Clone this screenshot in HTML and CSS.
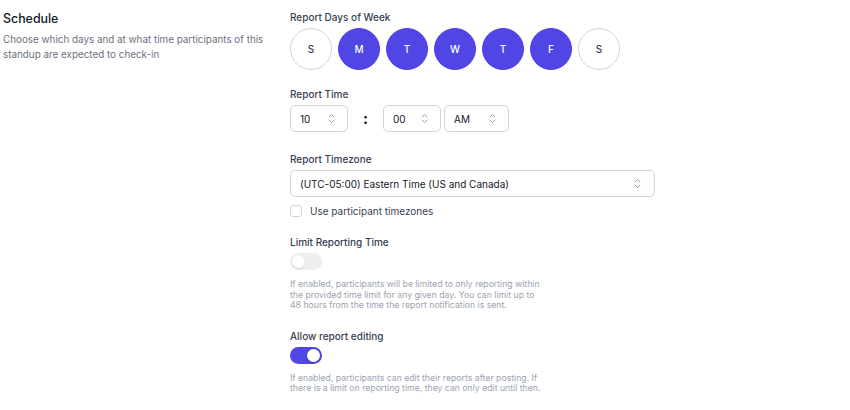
FILE: index.html
```html
<!DOCTYPE html>
<html lang="en">
<head>
    <meta charset="UTF-8">
    <meta name="viewport" content="width=device-width, initial-scale=1.0">
    <title>Schedule</title>
    <link rel="stylesheet" href="styles.css">
</head>
<body>

    <div class="section">
        <div class="intro">
            <h2>Schedule</h2>
            <p>Choose which days and at what time participants of this standup are expected to check-in</p>
        </div>

        <div class="fields">
            <div class="field days-field">
                <label>Report Days of Week</label>
                <div class="days">
                    <span class="day">S</span>
                    <span class="day on">M</span>
                    <span class="day on">T</span>
                    <span class="day on">W</span>
                    <span class="day on">T</span>
                    <span class="day on">F</span>
                    <span class="day">S</span>
                </div>
            </div>

            <div class="field time-field">
                <label>Report Time</label>
                <div class="time-row">
                    <div class="select small">
                        <span>10</span>
                        <svg width="7" height="11" viewBox="0 0 7 11"><path d="M1 4L3.5 1.5L6 4M1 7L3.5 9.5L6 7" fill="none" stroke="currentColor" stroke-width="1" stroke-linecap="round" stroke-linejoin="round"/></svg>
                    </div>
                    <span class="colon">:</span>
                    <div class="select small">
                        <span>00</span>
                        <svg width="7" height="11" viewBox="0 0 7 11"><path d="M1 4L3.5 1.5L6 4M1 7L3.5 9.5L6 7" fill="none" stroke="currentColor" stroke-width="1" stroke-linecap="round" stroke-linejoin="round"/></svg>
                    </div>
                    <div class="select ampm">
                        <span>AM</span>
                        <svg width="7" height="11" viewBox="0 0 7 11"><path d="M1 4L3.5 1.5L6 4M1 7L3.5 9.5L6 7" fill="none" stroke="currentColor" stroke-width="1" stroke-linecap="round" stroke-linejoin="round"/></svg>
                    </div>
                </div>
            </div>

            <div class="field">
                <label>Report Timezone</label>
                <div class="select wide">
                    <span>(UTC-05:00) Eastern Time (US and Canada)</span>
                    <svg width="7" height="11" viewBox="0 0 7 11"><path d="M1 4L3.5 1.5L6 4M1 7L3.5 9.5L6 7" fill="none" stroke="currentColor" stroke-width="1" stroke-linecap="round" stroke-linejoin="round"/></svg>
                </div>
                <div class="check-row">
                    <span class="checkbox"></span>
                    <span>Use participant timezones</span>
                </div>
            </div>

            <div class="field">
                <label>Limit Reporting Time</label>
                <span class="toggle disabled"><span class="knob"></span></span>
                <p class="help">If enabled, participants will be limited to only reporting within the provided time limit for any given day. You can limit up to 48 hours from the time the report notification is sent.</p>
            </div>

            <div class="field">
                <label>Allow report editing</label>
                <span class="toggle on"><span class="knob"></span></span>
                <p class="help">If enabled, participants can edit their reports after posting. If there is a limit on reporting time, they can only edit until then.</p>
            </div>
        </div>
    </div>

</body>
</html>
```

FILE: styles.css
```css
body {
font-family: 'Inter', 'Noto Sans', sans-serif;
background-color: #fff;
margin: 0;
padding: 0;
color: #111827;
}

.section {
display: flex;
}

.intro {
width: 287px;
padding-left: 3px;
padding-top: 11px;
}

.intro h2 {
margin: 0;
font-size: 12.4px;
font-weight: 500;
line-height: 16px;
color: #111827;
}

.intro p {
margin: 5px 0 0;
font-size: 9.85px;
line-height: 14.5px;
color: #6b7280;
max-width: 272px;
}

.fields {
padding-top: 10px;
}

.field {
margin-bottom: 18px;
}

.days-field {
margin-bottom: 17px;
}

.time-field {
margin-bottom: 20px;
}

label {
display: block;
font-size: 10px;
font-weight: 500;
line-height: 14px;
color: #374151;
margin-bottom: 4px;
}

.days {
display: flex;
gap: 6px;
}

.day {
width: 42px;
height: 42px;
box-sizing: border-box;
border-radius: 50%;
border: 1px solid #d1d5db;
display: flex;
align-items: center;
justify-content: center;
font-size: 10px;
font-weight: 500;
color: #374151;
}

.day.on {
background-color: #4f46e5;
border-color: #4f46e5;
color: #fff;
}

.time-row {
display: flex;
align-items: center;
}

.select {
display: flex;
align-items: center;
justify-content: space-between;
height: 27px;
box-sizing: border-box;
border: 1px solid #d1d5db;
border-radius: 5px;
padding: 0 12px 0 9px;
font-size: 10px;
color: #111827;
background-color: #fff;
}

.select svg {
color: #9ca3af;
}

.select.small {
width: 58px;
}

.select.ampm {
width: 65px;
margin-left: 3px;
}

.select.wide {
width: 365px;
padding-right: 13px;
}

.colon {
width: 35px;
text-align: center;
font-size: 15px;
font-weight: 700;
color: #111827;
}

.check-row {
display: flex;
align-items: center;
gap: 8px;
margin-top: 8px;
font-size: 10px;
line-height: 12px;
color: #374151;
}

.checkbox {
width: 12px;
height: 12px;
box-sizing: border-box;
border: 1px solid #d1d5db;
border-radius: 3px;
}

.toggle {
display: flex;
align-items: center;
width: 32px;
height: 17px;
border-radius: 9px;
background-color: #e5e7eb;
padding: 2px;
box-sizing: border-box;
margin-top: 2px;
}

.toggle .knob {
width: 13px;
height: 13px;
border-radius: 50%;
background-color: #fff;
box-shadow: 0 1px 2px rgba(0, 0, 0, 0.15);
}

.toggle.disabled {
opacity: 0.7;
}

.toggle.on {
background-color: #4f46e5;
justify-content: flex-end;
}

.help {
margin: 9px 0 0;
font-size: 8.7px;
line-height: 10.5px;
color: #9ca3af;
max-width: 256px;
}
```
